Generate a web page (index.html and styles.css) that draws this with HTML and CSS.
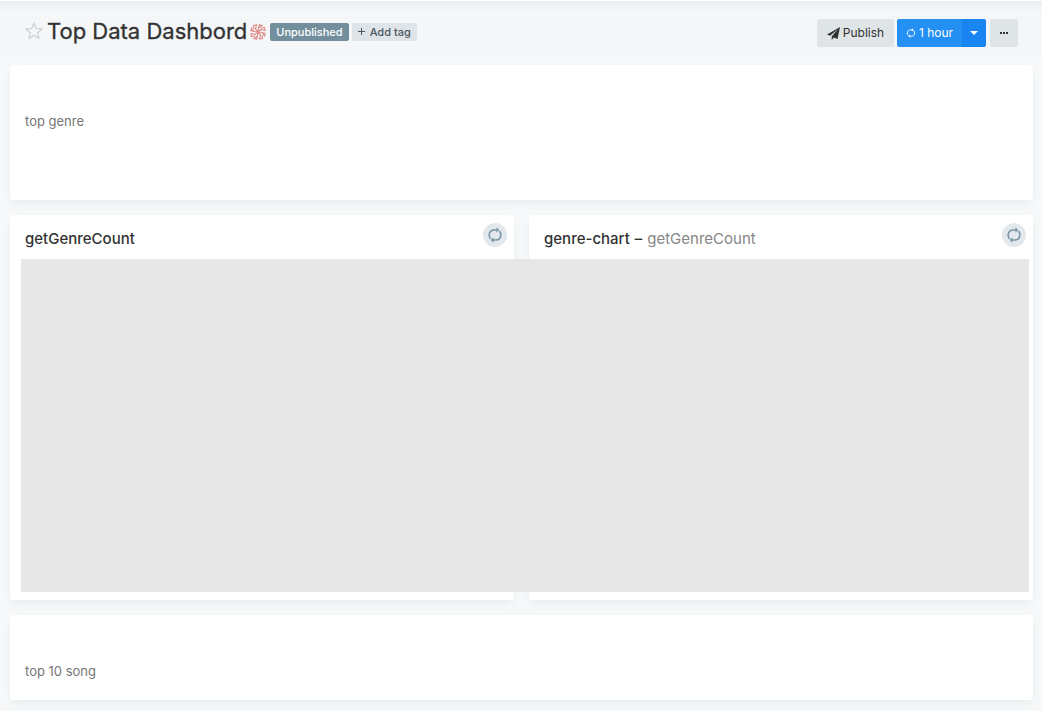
FILE: index.html
```html
<!DOCTYPE html>
<html lang="en">
<head>
<meta charset="utf-8">
<meta name="viewport" content="width=device-width, initial-scale=1">
<title>Top Data Dashbord</title>
<link rel="stylesheet" href="styles.css">
</head>
<body>
<svg class="symbols" aria-hidden="true">
  <symbol id="sync" viewBox="0 0 16 16">
    <path d="M3.500 12C1 8.500 2 3.200 7 3H10M12.500 4C15 7.500 14 12.800 9 13H6" fill="none" stroke="currentColor" stroke-width="1.600"/>
    <path d="M9.500 .3v5.400l2.700-2.700zM6.500 15.700v-5.400l-2.700 2.700z" fill="currentColor"/>
  </symbol>
</svg>
<header class="header">
  <div class="heading">
    <button class="favorite" aria-label="Favorite">
      <svg width="18" height="18" viewBox="0 0 18 18"><path d="M9 1.200l2.200 5.300 5.900.4-4.500 3.800 1.400 5.700L9 13.300l-5 3.100 1.400-5.700L.9 6.900l5.900-.4z" fill="none" stroke="#d0d3d5" stroke-width="1.300" stroke-linejoin="round"/></svg>
    </button>
    <h1>Top Data Dashbord</h1>
    <svg class="avatar" width="16" height="16" viewBox="0 0 16 16" aria-hidden="true">
      <g fill="none" stroke="#df918d" stroke-width="1.200">
        <path d="M8 8L5.500 5 6.500 1 3.500 1.500 4 5M8 8l.5-4L12 1.500 9.500.8 8.500 4M8 8l3-2.500 4 1-.5-3-3.500.5M8 8l4 .5 2.500 3.500.7-2.500L12 8.500M8 8l2.500 3-1 4 3-.5-.5-3.500M8 8l-.5 4L4 14.500l2.500.7 1-3.200M8 8l-3 2.500-4-1 .5 3 3.500-.5M8 8l-4-.5L1.500 4 .8 6.500 4 7.500"/>
      </g>
    </svg>
    <div class="tags">
      <span class="tag status">Unpublished</span>
      <button class="tag add"><svg width="7" height="7" viewBox="0 0 7 7" aria-hidden="true"><path d="M3.500 0v7M0 3.500h7" stroke="currentColor"/></svg>Add tag</button>
    </div>
  </div>
  <div class="actions">
    <button class="btn publish"><svg width="13" height="13" viewBox="0 0 16 16" aria-hidden="true"><path d="M16 0L0 9.200l3.800 1.600L13.500 2.500 5.800 11.700V16l2.500-3.200 4.700 2z" fill="currentColor"/></svg>Publish</button>
    <div class="split">
      <button class="btn refresh"><svg width="10" height="10" aria-hidden="true"><use href="#sync"/></svg>1 hour</button>
      <button class="btn caret" aria-label="Refresh interval"><svg width="8" height="4" viewBox="0 0 8 4"><path d="M0 0h8L4 4z" fill="currentColor"/></svg></button>
    </div>
    <button class="btn more" aria-label="More"><svg width="8" height="2" viewBox="0 0 8 2"><path d="M0 0h2v2H0zM3 0h2v2H3zM6 0h2v2H6z" fill="currentColor"/></svg></button>
  </div>
</header>
<main class="dashboard">
  <section class="card text-card tall"><p>top genre</p></section>
  <div class="charts">
    <section class="card chart-card">
      <h2>getGenreCount</h2>
      <button class="sync" aria-label="Refresh getGenreCount"><svg width="16" height="16" aria-hidden="true"><use href="#sync"/></svg></button>
    </section>
    <section class="card chart-card">
      <h2>genre-chart <span class="dash">–</span> <span class="query">getGenreCount</span></h2>
      <button class="sync" aria-label="Refresh genre-chart"><svg width="16" height="16" aria-hidden="true"><use href="#sync"/></svg></button>
    </section>
    <div class="cover"></div>
  </div>
  <section class="card text-card"><p>top 10 song</p></section>
</main>
</body>
</html>
```
FILE: styles.css
```css
* { box-sizing: border-box; }
body {
  margin: 0;
  min-height: 100vh;
  background: #f6f8f9;
  color: #323232;
  font: 13px/18px Inter, "Liberation Sans", sans-serif;
}
button { border: 0; padding: 0; font: inherit; color: inherit; cursor: pointer; }
svg { display: block; flex: none; }
h1, h2, p { margin: 0; font-weight: 400; }
.symbols { position: absolute; width: 0; height: 0; }

.header {
  display: flex;
  justify-content: space-between;
  align-items: center;
  height: 65px;
  padding: 0 24px;
  border-top: 1px solid #fff;
  background: linear-gradient(#e9eef0, #f4f6f8 10px, #f4f6f8 53px, #f6f8f9 54px);
}
.heading { display: flex; align-items: center; padding-bottom: 3px; }
.favorite { background: none; margin: 0 4px 2px 1px; }
h1 { padding-bottom: 2px; font-size: 22px; line-height: 30px; white-space: nowrap; -webkit-text-stroke: 0.3px; }
.avatar { margin: 0 4px 0 3px; }
.tags { display: flex; gap: 3px; }
.tag {
  display: flex;
  align-items: center;
  height: 18px;
  padding: 0 6px;
  border-radius: 2px;
  font-size: 11px;
  font-weight: 500;
  white-space: nowrap;
}
.status { background: #738f9d; color: #fff; }
.add { gap: 5px; background: #dfe4e8; color: #49565f; }
.actions { display: flex; gap: 3px; }
.btn {
  display: flex;
  align-items: center;
  justify-content: center;
  height: 28px;
  border-radius: 2px;
  background: #dfe4e7;
  font-size: 12px;
  white-space: nowrap;
}
.publish { width: 77px; gap: 3px; }
.split { display: flex; }
.refresh { width: 65px; gap: 3px; border-radius: 2px 0 0 2px; background: #2490f3; color: #fff; }
.caret { width: 24px; border-radius: 0 2px 2px 0; background: #1885f0; color: #fff; }
.more { width: 28px; margin-left: 1px; }

.dashboard { display: grid; gap: 15px; padding: 0 9px 11px 10px; }
.card {
  border-radius: 3px;
  background: #fff;
  box-shadow: 0 4px 9px -3px rgba(102, 136, 153, .15);
}
.text-card { padding: 47px 15px 20px; color: #767676; }
.text-card.tall { padding-bottom: 70px; }
.charts { position: relative; display: grid; grid-template-columns: 1fr 1fr; gap: 15px; }
.chart-card {
  display: flex;
  justify-content: space-between;
  align-items: flex-start;
  min-height: 385px;
  padding: 8px 7px 8px 15px;
}
h2 { padding-top: 6px; font-size: 15px; line-height: 20px; font-weight: 500; }
.dash { margin: 0 1px; }
.query { color: #858585; font-weight: 400; }
.sync {
  display: grid;
  place-items: center;
  width: 24px;
  height: 24px;
  border-radius: 50%;
  background: #e3e8ec;
  color: #7795a4;
}
.cover {
  position: absolute;
  inset: 44px 4px 8px 11px;
  background: #e7e7e7;
}
```
